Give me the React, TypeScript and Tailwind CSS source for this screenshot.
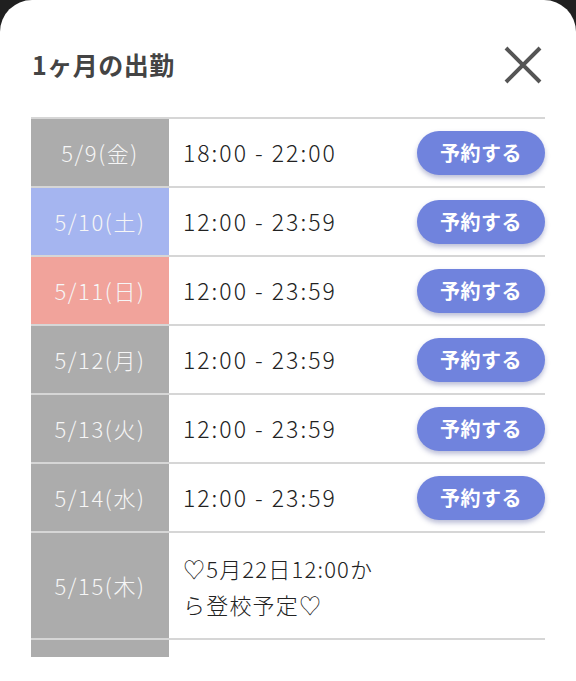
import { Fragment } from 'react';

const font = { fontFamily: '"Noto Sans CJK JP", "Noto Sans", sans-serif' };

type Row = { date: string; tone: 'gray' | 'blue' | 'pink'; time?: string; note?: string };

const rows: Row[] = [
  { date: '5/9(金)', tone: 'gray', time: '18:00 - 22:00' },
  { date: '5/10(土)', tone: 'blue', time: '12:00 - 23:59' },
  { date: '5/11(日)', tone: 'pink', time: '12:00 - 23:59' },
  { date: '5/12(月)', tone: 'gray', time: '12:00 - 23:59' },
  { date: '5/13(火)', tone: 'gray', time: '12:00 - 23:59' },
  { date: '5/14(水)', tone: 'gray', time: '12:00 - 23:59' },
  { date: '5/15(木)', tone: 'gray', note: '♡5月22日12:00から登校予定♡' },
];

const toneClass = {
  gray: 'bg-[#acacac]',
  blue: 'bg-[#a5b5f0]',
  pink: 'bg-[#f1a39b]',
};

export default function App() {
  return (
    <div className="h-[681px] w-[576px] bg-[#202020] overflow-hidden" style={font}>
      <div className="h-full bg-white rounded-t-[32px]">
        {/* Header */}
        <div className="flex items-center justify-between pl-[32px] pr-[34px] pt-[44px] pb-[33px]">
          <h2 className="text-[25px] font-bold text-[#444] leading-[40px] tracking-[0.5px]">1ヶ月の出勤</h2>
          <svg width="38" height="38" viewBox="0 0 38 38" className="text-[#555] mt-[2px]">
            <path d="M2 2 L36 36 M36 2 L2 36" stroke="currentColor" strokeWidth="4" />
          </svg>
        </div>

        {/* Schedule table */}
        <div className="mx-[31px] border-t-2 border-[#d6d6d6]">
          {rows.map((r) => (
            <Fragment key={r.date}>
              <div className={`flex border-b-2 border-[#d6d6d6] ${r.note ? 'h-[107px]' : 'h-[69px]'}`}>
                <div
                  className={`w-[138px] shrink-0 flex items-center justify-center text-[22px] font-light tracking-[1.6px] text-[#f6f6f6] ${toneClass[r.tone]}`}
                >
                  {r.date}
                </div>
                <div className="flex-1 flex items-center pl-[14px]">
                  {r.time ? (
                    <>
                      <span className="flex-1 text-[23px] font-light text-[#222] tracking-[2px]">{r.time}</span>
                      <button className="w-[128px] h-[44px] rounded-full bg-[#7083dd] text-white text-[20px] font-bold tracking-[0.5px] shadow-[0_3px_5px_rgba(60,70,140,0.35)]">
                        予約する
                      </button>
                    </>
                  ) : (
                    <p className="w-[206px] text-[22px] font-light leading-[36px] tracking-[1.2px] text-[#222]">{r.note}</p>
                  )}
                </div>
              </div>
            </Fragment>
          ))}
          <div className="h-[17px] w-[138px] bg-[#acacac]" />
        </div>
      </div>
    </div>
  );
}
